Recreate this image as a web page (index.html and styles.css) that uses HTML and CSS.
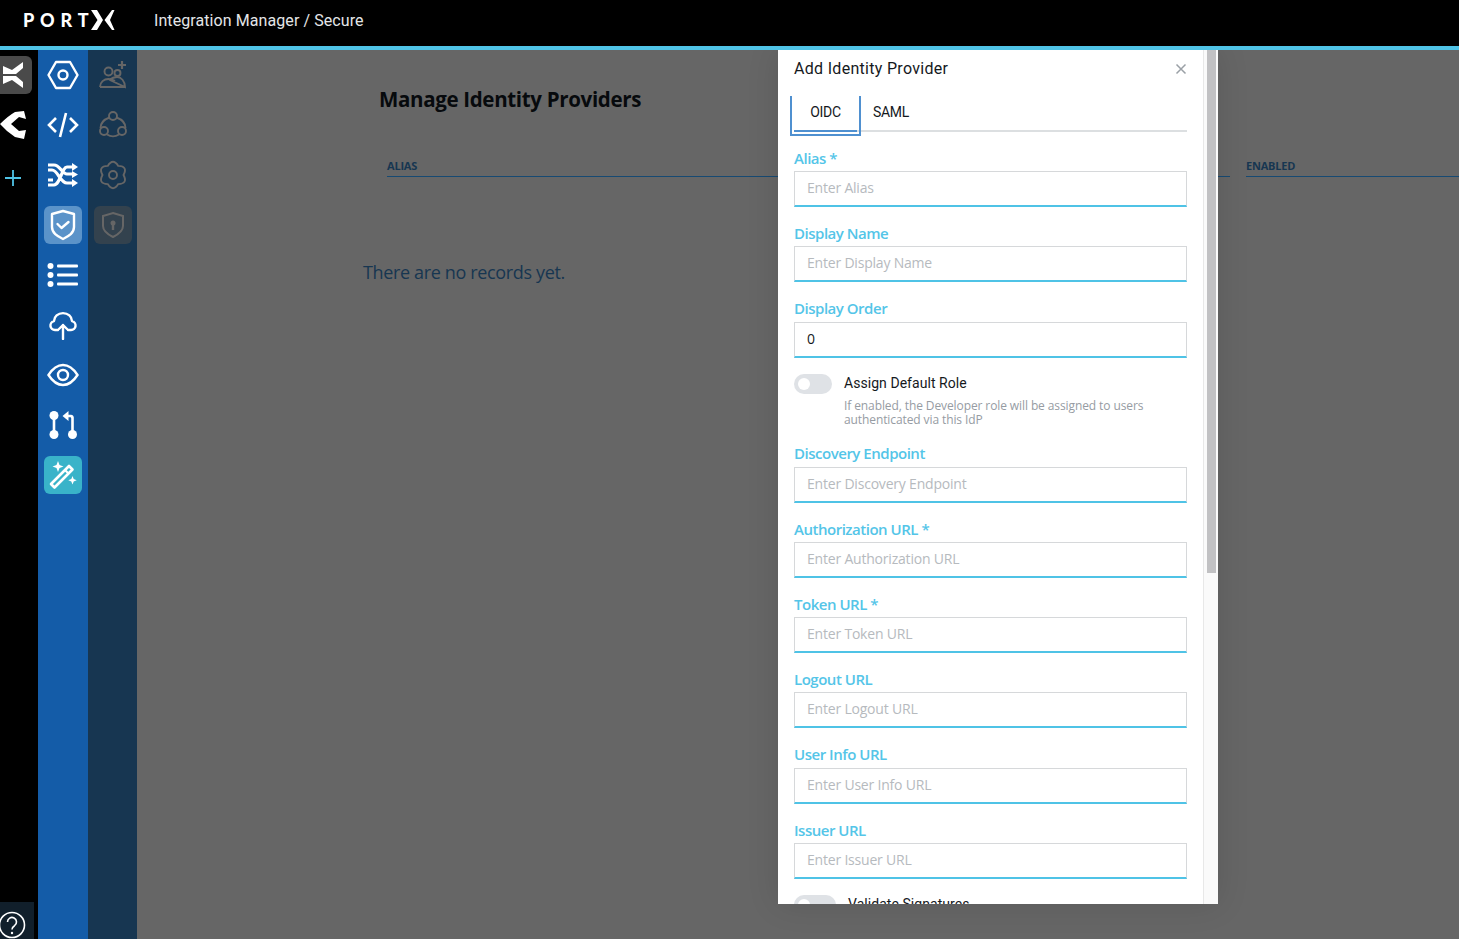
FILE: index.html
```html
<!DOCTYPE html>
<html lang="en">
<head>
    <meta charset="UTF-8">
    <meta name="viewport" content="width=device-width, initial-scale=1.0">
    <title>Integration Manager / Secure</title>
    <link rel="stylesheet" href="styles.css">
</head>
<body>
    <header class="topbar">
        <div class="logo">
            <span class="logo-text">PORT</span>
            <svg class="logo-x" width="25" height="20" viewBox="0 0 25 20"><path d="M1 0h6l6 10-6 10H1l6.500-10zM24.500 0h-2.500l-7.500 10 7.500 10h2.500l-4.500-10z" fill="#fff"/></svg>
        </div>
        <div class="crumb">Integration Manager / Secure</div>
    </header>

    <div class="layout">
        <nav class="rail-black">
            <div class="rail-item active">
                <svg width="26" height="30" viewBox="0 0 26 30"><path d="M0 6l9 4 11-8v6l-7 6H0zM0 24l9-4 11 8v-6l-7-6H0z" fill="#fff"/></svg>
            </div>
            <div class="rail-item plain">
                <svg width="28" height="28" viewBox="0 0 28 28"><path d="M0 13Q8 5 15 1l9-1 2 8-7-2-8 7 8 7 7-1-2 9-9-2Q7 21 0 13z" fill="#fff"/></svg>
            </div>
            <div class="rail-plus">
                <svg width="18" height="18" viewBox="0 0 18 18"><path d="M9 1v16M1 9h16" stroke="#4fc3e6" stroke-width="1.800" fill="none"/></svg>
            </div>
            <div class="rail-help">
                <svg width="28" height="28" viewBox="0 0 28 28" fill="none" stroke="#fff" stroke-width="1.600"><circle cx="12" cy="14" r="12.500"/><path d="M7.500 11a4.500 4.500 0 1 1 7 3.700c-1.600 1-2.500 2-2.500 3.800"/><circle cx="12" cy="22" r="1.200" fill="#fff" stroke="none"/></svg>
            </div>
        </nav>

        <nav class="rail-blue">
            <div class="nav-item">
                <svg width="32" height="30" viewBox="0 0 32 30" fill="none" stroke="#fff" stroke-width="2.400" stroke-linejoin="round"><path d="M9 2h14l7.500 13L23 28H9L1.500 15z"/><circle cx="16" cy="15" r="4.500"/></svg>
            </div>
            <div class="nav-item">
                <svg width="32" height="28" viewBox="0 0 32 28" fill="none" stroke="#fff" stroke-width="2.600"><path d="M9 7l-7 7 7 7M23 7l7 7-7 7M19 2l-6 24"/></svg>
            </div>
            <div class="nav-item">
                <svg width="30" height="24" viewBox="0 0 30 24" fill="none" stroke="#fff" stroke-width="3.200"><path d="M0 2h6c6 0 8 9 13 9h6M0 22h6c6 0 8-18 13-18h6M0 7h4c6 0 8 13 15 13h6M0 17h5"/><path d="M24 0l6 4-6 4zM24 8l6 3.500-6 3.500zM24 16l6 4-6 4z" fill="#fff" stroke="none"/></svg>
            </div>
            <div class="nav-item selected">
                <svg width="26" height="32" viewBox="0 0 26 32" fill="none" stroke="#fff" stroke-width="2.400" stroke-linejoin="round"><path d="M13 2l11 3v13c0 6-5 9-11 12C7 27 2 24 2 18V5z"/><path d="M7.500 15l4 4 7-6" stroke-linecap="round"/></svg>
            </div>
            <div class="nav-item">
                <svg width="32" height="26" viewBox="0 0 32 26"><g fill="#fff"><circle cx="3.500" cy="4" r="3"/><circle cx="3.500" cy="13" r="3"/><circle cx="3.500" cy="22" r="3"/><rect x="10" y="2.500" width="21" height="3" rx="1"/><rect x="10" y="11.500" width="21" height="3" rx="1"/><rect x="10" y="20.500" width="21" height="3" rx="1"/></g></svg>
            </div>
            <div class="nav-item">
                <svg width="30" height="30" viewBox="0 0 30 30" fill="none" stroke="#fff" stroke-width="2.400" stroke-linecap="round" stroke-linejoin="round"><path d="M10 20H7a4.500 4.500 0 0 1-1-8.900 9 8 0 0 1 18 0A4.500 4.500 0 0 1 23 20h-3"/><path d="M15 29V15M11 19l4-4 4 4"/></svg>
            </div>
            <div class="nav-item">
                <svg width="32" height="24" viewBox="0 0 32 24" fill="none" stroke="#fff" stroke-width="2.400"><path d="M1.500 12C6 5 11 2 16 2s10 3 14.500 10C26 19 21 22 16 22S6 19 1.500 12z"/><circle cx="16" cy="12" r="5"/></svg>
            </div>
            <div class="nav-item">
                <svg width="30" height="30" viewBox="0 0 30 30"><g fill="#fff"><circle cx="6" cy="5.500" r="4.500"/><circle cx="6" cy="24.500" r="4.500"/><circle cx="24.500" cy="24.500" r="4.500"/><path d="M14.500 6l6-5v3.700h2.500c1.500 0 2.800 1.300 2.800 2.800V22h-2.600V8.500c0-.7-.5-1.200-1.200-1.200h-1.500V11z"/></g><path d="M6 6v18" stroke="#fff" stroke-width="2.600"/></svg>
            </div>
            <div class="nav-item magic">
                <svg width="30" height="30" viewBox="0 0 30 30"><path d="M3 24L21 6l3.500 3.500L6.500 27.500z" fill="none" stroke="#fff" stroke-width="2.600" stroke-linejoin="round"/><path d="M17 10l3.500 3.500" stroke="#fff" stroke-width="2.200"/><path d="M10 1l1.500 4 4 1.500-4 1.500L10 12 8.500 8l-4-1.500 4-1.500zM24.500 16l1.200 3 3 1.200-3 1.200-1.200 3-1.200-3-3-1.200 3-1.200z" fill="#fff"/></svg>
            </div>
        </nav>

        <nav class="rail-navy">
            <div class="nav-item">
                <svg width="28" height="30" viewBox="0 0 28 30" fill="none" stroke="#666" stroke-width="1.900"><circle cx="9.500" cy="11.500" r="4"/><circle cx="18.500" cy="13" r="3"/><path d="M1 27c0-5 4-8 8.500-8 3 0 5 1 6.500 2M11 20c2-2 5-3 7-3 4 0 8 4 8 10zM1 27h25"/><path d="M23 1v8M19 5h8" stroke-width="2.200"/></svg>
            </div>
            <div class="nav-item">
                <svg width="28" height="28" viewBox="0 0 28 28" fill="none" stroke="#666" stroke-width="1.900"><circle cx="14" cy="5" r="4"/><circle cx="5" cy="20" r="4"/><circle cx="23" cy="20" r="4"/><path d="M10.500 6.500C5 8.500 1.500 12 1.500 17M17.500 6.500C23 8.500 26.500 12 26.500 17M8 23.500c4 2.500 8 2.500 12 0"/></svg>
            </div>
            <div class="nav-item">
                <svg width="30" height="30" viewBox="0 0 30 30" fill="none" stroke="#666" stroke-width="1.900" stroke-linejoin="round"><path d="M9.750 5.900Q15-2.500 20.250 5.900Q30.200 6.250 25.500 15Q30.200 23.750 20.250 24.100Q15 32.500 9.750 24.100Q-.2 23.750 4.500 15Q-.2 6.250 9.750 5.900z"/><circle cx="15" cy="15" r="4"/></svg>
            </div>
            <div class="nav-item locked">
                <svg width="26" height="28" viewBox="0 0 26 28" fill="none" stroke="#666" stroke-width="2"><path d="M13 2l10 3v10c0 5-4 8-10 11C7 23 3 20 3 15V5z"/><circle cx="13" cy="12" r="2.500" fill="#666" stroke="none"/><path d="M13 13v6" stroke-width="2.400"/></svg>
            </div>
        </nav>

        <main class="content">
            <h1 class="page-title">Manage Identity Providers</h1>
            <div class="table-head">
                <div class="col-head">ALIAS</div>
                <div class="col-head">ENABLED</div>
            </div>
            <p class="empty">There are no records yet.</p>

            <aside class="modal">
                <div class="modal-scroll">
                    <div class="modal-head">
                        <span class="modal-title">Add Identity Provider</span>
                        <svg class="modal-close" width="12" height="12" viewBox="0 0 12 12"><path d="M1.500 1.500l9 9M10.500 1.500l-9 9" stroke="#9aa0a6" stroke-width="1.500"/></svg>
                    </div>
                    <div class="tabs">
                        <div class="tab focused"><span>OIDC</span></div>
                        <div class="tab">SAML</div>
                    </div>

                    <div class="field">
                        <label class="field-label">Alias *</label>
                        <input class="field-input" placeholder="Enter Alias">
                    </div>
                    <div class="field">
                        <label class="field-label">Display Name</label>
                        <input class="field-input" placeholder="Enter Display Name">
                    </div>
                    <div class="field">
                        <label class="field-label">Display Order</label>
                        <input class="field-input" value="0">
                    </div>

                    <div class="toggle-row">
                        <span class="toggle"></span>
                        <div class="toggle-text">
                            <div class="toggle-label">Assign Default Role</div>
                            <div class="toggle-help">If enabled, the Developer role will be assigned to users authenticated via this IdP</div>
                        </div>
                    </div>

                    <div class="field">
                        <label class="field-label">Discovery Endpoint</label>
                        <input class="field-input" placeholder="Enter Discovery Endpoint">
                    </div>
                    <div class="field">
                        <label class="field-label">Authorization URL *</label>
                        <input class="field-input" placeholder="Enter Authorization URL">
                    </div>
                    <div class="field">
                        <label class="field-label">Token URL *</label>
                        <input class="field-input" placeholder="Enter Token URL">
                    </div>
                    <div class="field">
                        <label class="field-label">Logout URL</label>
                        <input class="field-input" placeholder="Enter Logout URL">
                    </div>
                    <div class="field">
                        <label class="field-label">User Info URL</label>
                        <input class="field-input" placeholder="Enter User Info URL">
                    </div>
                    <div class="field">
                        <label class="field-label">Issuer URL</label>
                        <input class="field-input" placeholder="Enter Issuer URL">
                    </div>

                    <div class="toggle-row last">
                        <span class="toggle big"></span>
                        <div class="toggle-text">
                            <div class="toggle-label">Validate Signatures</div>
                        </div>
                    </div>
                </div>
                <div class="scrollbar"><div class="scrollbar-thumb"></div></div>
            </aside>
        </main>
    </div>
</body>
</html>
```

FILE: styles.css
```css
* {
    box-sizing: border-box;
}
html, body {
    height: 100%;
}
body {
    margin: 0;
    font-family: 'Open Sans', sans-serif;
    background-color: #000;
    overflow: hidden;
    display: flex;
    flex-direction: column;
}

/* top bar */
.topbar {
    flex: 0 0 50px;
    display: flex;
    align-items: flex-start;
    background-color: #000;
    border-bottom: 4px solid #4fc3e6;
}
.logo {
    display: flex;
    align-items: center;
    height: 40px;
    margin-left: 23px;
    width: 131px;
}
.logo-text {
    font-family: 'Lato', sans-serif;
    font-weight: 900;
    font-size: 18px;
    letter-spacing: 5.8px;
    color: #fff;
}
.logo-x {
    margin-left: -4px;
}
.crumb {
    font-family: 'Roboto', sans-serif;
    font-size: 16px;
    line-height: 41px;
    letter-spacing: 0.08px;
    color: #e4e6e8;
}

/* rails */
.layout {
    flex: 1;
    display: flex;
    min-height: 0;
}
.rail-black {
    flex: 0 0 38px;
    display: flex;
    flex-direction: column;
    padding-top: 6px;
}
.rail-item {
    width: 32px;
    height: 38px;
    margin-bottom: 12px;
    display: flex;
    align-items: center;
    justify-content: center;
    overflow: hidden;
    border-radius: 0 6px 6px 0;
}
.rail-item.active {
    background-color: #4a4a4a;
}
.rail-item.plain {
    justify-content: flex-start;
    overflow: visible;
}
.rail-plus {
    width: 26px;
    height: 38px;
    margin-top: 3px;
    display: flex;
    align-items: center;
    justify-content: center;
}
.rail-help {
    margin-top: auto;
    width: 34px;
    height: 37px;
    background-color: #111f2b;
    padding-top: 9px;
    overflow: hidden;
}
.rail-blue, .rail-navy {
    display: flex;
    flex-direction: column;
    align-items: center;
    gap: 12px;
    padding-top: 6px;
}
.rail-blue {
    flex: 0 0 50px;
    background-color: #145ca8;
}
.rail-navy {
    flex: 0 0 49px;
    background-color: #173651;
}
.nav-item {
    width: 38px;
    height: 38px;
    flex: none;
    border-radius: 6px;
    display: flex;
    align-items: center;
    justify-content: center;
}
.nav-item.selected {
    background-color: #5b93c9;
}
.nav-item.magic {
    background-color: #39b3c9;
}
.nav-item.locked {
    background-color: #33424e;
}

/* page behind the dialog */
.content {
    flex: 1;
    position: relative;
    background-color: #666;
    overflow: hidden;
    padding: 35px 0 0 226px;
}
.page-title {
    margin: 0 0 0 16px;
    font-size: 20.5px;
    line-height: 28px;
    font-weight: 700;
    letter-spacing: -0.33px;
    color: #070a0d;
}
.table-head {
    display: grid;
    grid-template-columns: 843px 1fr;
    gap: 16px;
    margin: 46px 0 0 24px;
}
.col-head {
    font-size: 11px;
    line-height: 14px;
    padding-bottom: 3px;
    font-weight: 700;
    letter-spacing: -0.2px;
    color: #173651;
    border-bottom: 1px solid #174a73;
}
.empty {
    margin: 83px 0 0;
    font-size: 18px;
    line-height: 24px;
    letter-spacing: -0.35px;
    color: #173651;
}

/* dialog */
.modal {
    position: absolute;
    left: 641px;
    top: 0;
    width: 440px;
    height: 854px;
    display: flex;
    background-color: #fff;
    box-shadow: 0 0 30px rgba(0, 0, 0, 0.12);
    overflow: hidden;
}
.modal-scroll {
    flex: 1;
    padding: 0 16px;
    overflow: hidden;
}
.scrollbar {
    flex: 0 0 15px;
    background-color: #fafafa;
    border-left: 1px solid #e8e8e8;
    padding: 0 2px 0 3px;
}
.scrollbar-thumb {
    height: 523px;
    background-color: #c1c1c3;
}
.modal-head {
    display: flex;
    justify-content: space-between;
    align-items: center;
    height: 37px;
    margin-bottom: 9px;
}
.modal-title {
    font-family: 'Roboto', sans-serif;
    font-size: 16px;
    letter-spacing: 0.3px;
    color: #15191d;
}
.tabs {
    display: flex;
    height: 36px;
    margin-bottom: 17.700px;
    border-bottom: 2px solid #dcdfe1;
}
.tab {
    font-family: 'Roboto', sans-serif;
    font-size: 14px;
    line-height: 32px;
    letter-spacing: -0.3px;
    color: #15191d;
    padding: 0 16px;
}
.tab.focused {
    position: relative;
    width: 63px;
    height: 36px;
    padding: 0;
    text-align: center;
    border-bottom: 2px solid #4f90d0;
}
.tab.focused::after {
    content: "";
    position: absolute;
    left: -4px;
    right: -4px;
    top: 0;
    bottom: -6px;
    border: 2px solid #4f90d0;
    border-top: 0;
}
.field {
    margin-bottom: 18px;
}
.field-label {
    display: block;
    height: 21.300px;
    font-size: 15px;
    line-height: 17px;
    font-weight: 600;
    letter-spacing: -0.48px;
    color: #54c5e8;
}
.field-input {
    display: block;
    width: 100%;
    height: 36px;
    padding: 0 12px 2px;
    font-family: 'Open Sans', sans-serif;
    font-size: 14px;
    letter-spacing: -0.2px;
    color: #15191d;
    background-color: #fff;
    border: 1px solid #d6d8da;
    border-bottom: 2px solid #4fc3e6;
    border-radius: 0;
    outline: none;
}
.field-input::placeholder {
    color: #b6babe;
}
.toggle-row {
    display: flex;
    gap: 12px;
    margin-bottom: 18px;
    margin-top: -2px;
    height: 53.650px;
}
.toggle-row.last {
    height: 40px;
}
.toggle {
    flex: none;
    width: 38px;
    height: 20px;
    border-radius: 10px;
    background-color: #dfe2e6;
    position: relative;
}
.toggle::after {
    content: "";
    position: absolute;
    left: 4px;
    top: 4px;
    width: 12px;
    height: 12px;
    border-radius: 50%;
    background-color: #fff;
}
.toggle.big {
    width: 42px;
}
.toggle-label {
    font-family: 'Roboto', sans-serif;
    font-size: 14px;
    line-height: 18px;
    letter-spacing: 0.05px;
    color: #15191d;
}
.toggle-help {
    margin-top: 7px;
    font-size: 12px;
    line-height: 14px;
    letter-spacing: -0.1px;
    color: #969ca3;
}
```
